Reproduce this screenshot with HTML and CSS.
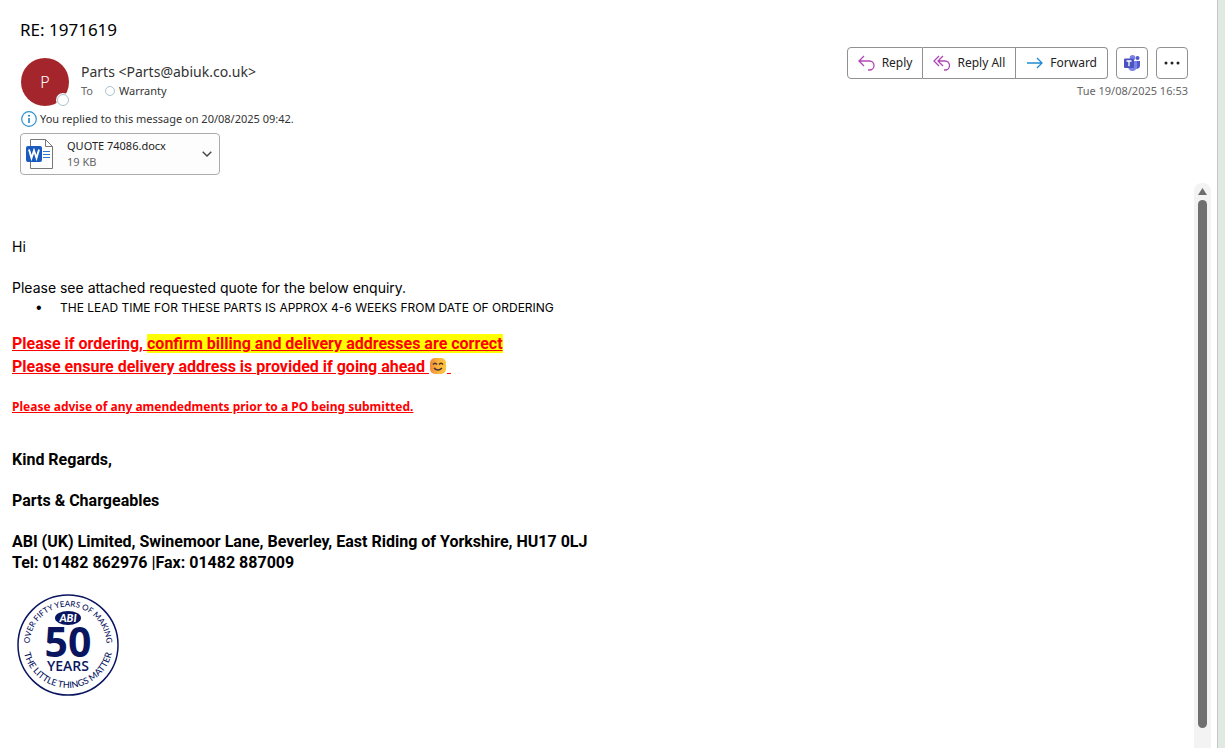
FILE: index.html
```html
<!DOCTYPE html>
<html lang="en">
<head>
<meta charset="utf-8">
<title>RE: 1971619</title>
<link rel="stylesheet" href="styles.css">
</head>
<body>
<div class="window">
  <main class="pane">
    <header class="mail-header">
      <h1 class="subject">RE: 1971619</h1>
      <div class="header-row">
        <div class="sender">
          <div class="avatar">P<span class="presence presence-large"></span></div>
          <div class="sender-lines">
            <div class="from">Parts &lt;Parts@abiuk.co.uk&gt;</div>
            <div class="to"><span class="to-label">To</span><span class="presence"></span><span>Warranty</span></div>
          </div>
        </div>
        <div class="header-side">
          <div class="actions">
            <div class="action-group">
              <button class="action" type="button">
                <svg width="18" height="16" viewBox="0 0 18 16" fill="none" stroke="#b146b8" stroke-width="1.3"><path d="M6 1 1 6l5 5M1 6h10.500a4.500 4.500 0 0 1 0 9h-1.500"/></svg>
                <span>Reply</span>
              </button>
              <button class="action" type="button">
                <svg width="18" height="16" viewBox="0 0 18 16" fill="none" stroke="#b146b8" stroke-width="1.3"><path d="M6 1 1 6l5 5M10 1 5 6l5 5M5 6h7a4.500 4.500 0 0 1 0 9h-1"/></svg>
                <span>Reply All</span>
              </button>
              <button class="action" type="button">
                <svg width="18" height="16" viewBox="0 0 18 16" fill="none" stroke="#1e8bd4" stroke-width="1.3"><path d="M1 8h15M11 3l5 5-5 5"/></svg>
                <span>Forward</span>
              </button>
            </div>
            <button class="action-square" type="button" aria-label="Share to Teams">
              <svg width="18" height="16" viewBox="0 0 18 16"><circle cx="14.500" cy="3" r="2" fill="#5059c9"/><path d="M12 6h5v5a3 3 0 0 1-5 2z" fill="#5059c9"/><circle cx="9.500" cy="2.800" r="2.800" fill="#7b83eb"/><path d="M5 6h9v5a4.500 4.500 0 0 1-9 1z" fill="#7b83eb"/><rect x="1" y="3.500" width="10" height="9.500" rx="1" fill="#4b53bc"/><path d="M3.500 6h5M6 6v5.200" stroke="#fff" stroke-width="1.300"/></svg>
            </button>
            <button class="action-square" type="button" aria-label="More actions">
              <svg width="16" height="4" viewBox="0 0 16 4" fill="#222"><circle cx="2" cy="2" r="1.500"/><circle cx="8" cy="2" r="1.500"/><circle cx="14" cy="2" r="1.500"/></svg>
            </button>
          </div>
          <time class="date" datetime="2025-08-19T16:53">Tue 19/08/2025 16:53</time>
        </div>
      </div>
      <div class="notice">
        <svg width="16" height="16" viewBox="0 0 16 16"><circle cx="8" cy="8" r="7.300" fill="none" stroke="#2b91cf" stroke-width="1.200"/><path d="M8 7v5" stroke="#1c86c9" stroke-width="1.600"/><circle cx="8" cy="4.700" r="1" fill="#1c86c9"/></svg>
        <span>You replied to this message on 20/08/2025 09:42.</span>
      </div>
      <button class="attachment" type="button">
        <svg width="28" height="32" viewBox="0 0 28 32"><path d="M4.500 1.500h15l7 7v22h-22z" fill="#fff" stroke="#777"/><path d="M19.500 1.500v7h7" fill="none" stroke="#777"/><path d="M17 13.500h7M17 16.500h7M17 19.500h7" stroke="#2b7cd3"/><rect y="8" width="16" height="16" rx="2" fill="#185abd"/><path d="M3 11.500 5.500 20 8 12.500 10.500 20 13 11.500" fill="none" stroke="#fff" stroke-width="1.900"/></svg>
        <span class="file"><span class="file-name">QUOTE 74086.docx</span><span class="file-size">19 KB</span></span>
        <svg width="10" height="6" viewBox="0 0 10 6" fill="none" stroke="#444" stroke-width="1.400"><path d="m.7.700 4.300 4.300L9.300.700"/></svg>
      </button>
    </header>
    <div class="reader">
      <article class="message">
        <p>Hi</p>
        <p class="intro">Please see attached requested quote for the below enquiry.</p>
        <ul class="points"><li>THE LEAD TIME FOR THESE PARTS IS APPROX 4-6 WEEKS FROM DATE OF ORDERING</li></ul>
        <p class="alert">Please if ordering, <mark>confirm billing and delivery addresses are correct</mark></p>
        <p class="alert alert-next">Please ensure delivery address is provided if going ahead <svg class="emoji" width="18" height="16" viewBox="0 0 18 16" role="img" aria-label="smile"><defs><linearGradient id="face" x1="0" x2="1"><stop offset="0" stop-color="#f08a3c"/><stop offset=".5" stop-color="#fbb33f"/><stop offset="1" stop-color="#fcc63d"/></linearGradient></defs><rect x="1" width="16" height="16" rx="5" fill="url(#face)"/><path d="M4 6.500q2-2.500 4 0M10 6.500q2-2.500 4 0M5 10q4 4 8 0" fill="none" stroke="#4a3030" stroke-width="1.400"/></svg>&nbsp;</p>
        <p class="alert alert-small">Please advise of any amendedments prior to a PO being submitted.</p>
        <div class="signature">
          <p>Kind Regards,</p>
          <p>Parts &amp; Chargeables</p>
          <p>ABI (UK) Limited, Swinemoor Lane, Beverley, East Riding of Yorkshire, HU17 0LJ<br>Tel: 01482 862976 |Fax: 01482 887009</p>
        </div>
        <svg class="badge" width="102" height="102" viewBox="0 0 102 102">
          <defs><path id="arc-top" d="M12.500 51a38.500 38.500 0 0 1 77 0"/><path id="arc-bottom" d="M6 49a45 45 0 0 0 90 0"/></defs>
          <circle cx="51" cy="51" r="50" fill="#fff" stroke="#0a1560" stroke-width="1.500"/>
          <g class="badge-text">
            <text class="badge-ring"><textPath href="#arc-top" startOffset="50%">OVER FIFTY YEARS OF MAKING</textPath></text>
            <text class="badge-ring badge-ring-low"><textPath href="#arc-bottom" startOffset="50%">THE LITTLE THINGS MATTER</textPath></text>
            <ellipse cx="51" cy="24" rx="13" ry="7"/>
            <text class="badge-brand" x="51" y="28">ABI</text>
            <text class="badge-number" x="51" y="63">50</text>
            <text class="badge-years" x="51" y="77">YEARS</text>
          </g>
        </svg>
      </article>
      <div class="scrollbar">
        <svg width="9" height="7" viewBox="0 0 9 7"><path d="M4.500 0 9 7H0z" fill="#6d6d6d"/></svg>
        <div class="thumb"></div>
      </div>
    </div>
  </main>
  <aside class="edge"></aside>
</div>
</body>
</html>
```
FILE: styles.css
```css
* { box-sizing: border-box; }
body { margin: 0; background: #fff; color: #333; font: 11px/16px "Noto Sans", "Open Sans", sans-serif; }
p, h1, ul { margin: 0; }
button { font: inherit; color: #222; background: #fff; border: 1px solid #919191; border-radius: 4px; padding: 0; }

.window { display: flex; min-height: 100vh; }
.pane { flex: 1; display: flex; flex-direction: column; }
.edge { width: 8px; background: #e1e9e3; border-left: 1px solid #c6c6c6; }

.mail-header { padding: 18px 29px 0 20px; }
.subject { font-size: 17px; line-height: 24px; font-weight: 400; color: #000; }
.header-row { display: flex; justify-content: space-between; margin-top: 5px; }
.sender { display: flex; gap: 12px; padding-top: 11px; }
.avatar { position: relative; width: 48px; height: 48px; margin-left: 1px; border-radius: 50%; background: #a4262c; color: #fff; font-size: 16px; line-height: 48px; font-weight: 300; text-align: center; }
.presence { width: 10px; height: 10px; border: 1px solid #a9c3cf; border-radius: 50%; background: #fff; }
.presence-large { position: absolute; right: 0; bottom: 0; width: 12px; height: 12px; box-shadow: 0 0 0 1px #fff; }
.from { font-size: 14px; line-height: 20px; padding-top: 4px; }
.to { display: flex; align-items: center; gap: 4px; line-height: 18px; }
.to-label { width: 20px; color: #666; }
.header-side { display: flex; flex-direction: column; align-items: flex-end; gap: 4px; }
.actions { display: flex; gap: 8px; }
.action-group { display: flex; }
.action { display: flex; align-items: center; gap: 6px; height: 32px; padding: 0 10px; border-radius: 0; font-size: 12px; }
.action + .action { border-left: 0; }
.action:first-child { border-radius: 4px 0 0 4px; }
.action:last-child { border-radius: 0 4px 4px 0; }
.action-square { display: flex; align-items: center; justify-content: center; width: 32px; height: 32px; }
.date { color: #666; }
.notice { display: flex; align-items: center; gap: 3px; margin-top: 5px; padding-left: 1px; }
.attachment { display: flex; align-items: center; width: 200px; height: 42px; margin-top: 6px; padding: 0 7px 0 5px; border-color: #ababab; background: #fdfdfd; text-align: left; }
.file { flex: 1; display: flex; flex-direction: column; padding-left: 13px; }
.file-size { color: #666; }

.reader { flex: 1; display: flex; margin-top: 8px; }
.message { flex: 1; padding: 53px 12px 0; color: #000; font: 14px/21px Inter, sans-serif; }
.intro { margin-top: 20px; }
.points { padding-left: 24px; list-style: none; font-size: 12px; line-height: 20px; }
.points li { display: flex; }
.points li::before { content: "•"; width: 24px; font: 16px/20px "Liberation Sans", sans-serif; }
.alert { margin-top: 15px; color: #f00; font: 700 16px/21px Roboto, sans-serif; text-decoration: underline; }
.alert mark { color: inherit; background: #ff0; }
.alert-next { margin-top: 2px; }
.alert-small { margin-top: 20px; font: 700 12px/20px "Noto Sans", sans-serif; }
.emoji { vertical-align: -2px; }
.signature { display: grid; gap: 20px; margin-top: 32px; font: 700 16px/21px Roboto, sans-serif; }
.badge { display: block; margin: 21px 0 0 5px; }
.badge-text { fill: #0a1560; font-family: Lato, sans-serif; text-anchor: middle; }
.badge-ring { font-size: 8px; font-weight: 500; }
.badge-ring-low { font-size: 9px; }
.badge-brand { fill: #fff; font-size: 11px; font-weight: 900; font-style: italic; }
.badge-number { font: 700 41px "Open Sans", sans-serif; }
.badge-years { font: 600 14px "Open Sans", sans-serif; }

.scrollbar { display: flex; flex-direction: column; align-items: center; gap: 5px; width: 17px; margin-right: 6px; padding: 5px 0 20px; border-radius: 8px 8px 0 0; background: #f3f3f3; }
.thumb { flex: 1; width: 9px; border-radius: 5px; background: #707070; }
```
